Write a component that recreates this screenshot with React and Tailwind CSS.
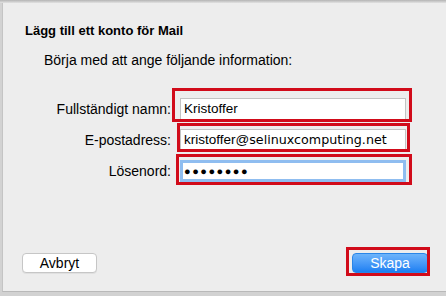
export default function App() {
  return (
    <div className="relative w-[446px] h-[296px] bg-[#d2d2d2] flex flex-col overflow-hidden font-['Liberation_Sans',Arial,sans-serif] text-[13px] text-black">
      <div className="h-[3px] bg-gradient-to-b from-[#b4b4b4] to-[#e2e2e2]" />
      <div className="ml-[2px] h-[289px] bg-[#ededed] border-l border-[#c4c4c4] border-b border-b-[#b9b9b9] flex flex-col">
        <div className="pl-[22px] pt-[20px] font-bold leading-4">Lägg till ett konto för Mail</div>
        <div className="pl-[41px] pt-[13px] leading-4 text-[14px]">Börja med att ange följande information:</div>

        <div className="mt-[30px] grid grid-cols-[168px_226px] gap-x-[9px] gap-y-[9px] items-center text-[14px]">
          <div className="text-right leading-4">Fullständigt namn:</div>
          <div className="h-[22px] bg-white border border-[#c3c3c3] pl-[3px] flex items-center text-[13.5px]">Kristoffer</div>

          <div className="text-right leading-4">E-postadress:</div>
          <div className="h-[22px] bg-white border border-[#c3c3c3] pl-[3px] flex items-center text-[13.5px]">
            kristoffer@<span className="font-['DejaVu_Sans',sans-serif] text-[12.7px]">selinuxcomputing.net</span>
          </div>

          <div className="text-right leading-4">Lösenord:</div>
          <div className="h-[22px] bg-white border-[3px] border-[#8fbdf0] pl-[1px] flex items-center text-[11px] tracking-[1.5px]">
            ●●●●●●●●
          </div>
        </div>

        <div className="mt-auto mb-[18px] flex justify-between items-center pl-[19px] pr-[18px]">
          <button className="w-[75px] h-[20px] bg-white border border-[#c6c6c6] rounded-[4px] leading-4 text-[14px] shadow-[0_1px_0_rgba(0,0,0,0.05)]">
            Avbryt
          </button>
          <button className="w-[76px] h-[20px] rounded-[4px] bg-gradient-to-b from-[#6db4fb] to-[#1a7ff2] text-white leading-4 text-[14px] border border-[#2a86e8]">
            Skapa
          </button>
        </div>
      </div>

      <div className="absolute left-[172px] top-[88px] w-[240px] h-[34px] border-[3px] border-[#d10b1a]" />
      <div className="absolute left-[177px] top-[123px] w-[233px] h-[29px] border-[3px] border-[#d10b1a]" />
      <div className="absolute left-[176px] top-[154px] w-[236px] h-[31px] border-[3px] border-[#d10b1a]" />
      <div className="absolute left-[346px] top-[247px] w-[84px] h-[29px] border-[3px] border-[#d10b1a]" />
    </div>
  );
}
